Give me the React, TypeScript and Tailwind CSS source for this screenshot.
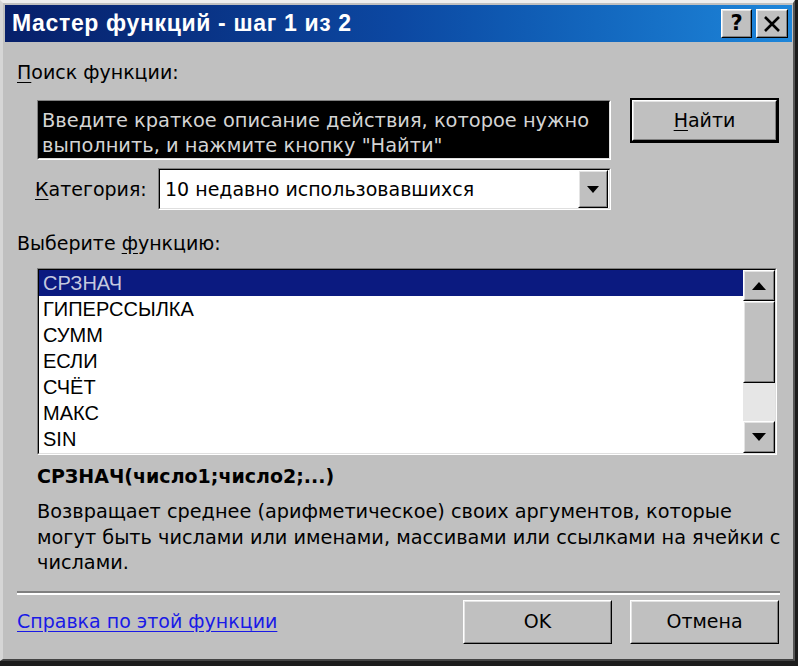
import React from "react";

function Raised({
  className = "",
  inner = "",
  children,
}: {
  className?: string;
  inner?: string;
  children?: React.ReactNode;
}) {
  return (
    <div
      className={`border border-t-white border-l-white border-r-black border-b-black bg-[#c0c0c0] ${className}`}
    >
      <div
        className={`w-full h-full border border-t-[#e4e4e4] border-l-[#e4e4e4] border-r-[#808080] border-b-[#808080] flex items-center justify-center ${inner}`}
      >
        {children}
      </div>
    </div>
  );
}

function Sunken({ className = "", children }: { className?: string; children?: React.ReactNode }) {
  return (
    <div
      className={`border border-t-[#808080] border-l-[#808080] border-r-white border-b-white ${className}`}
    >
      <div className="w-full h-full border border-t-black border-l-black border-r-[#dfdfdf] border-b-[#dfdfdf] flex overflow-hidden">
        {children}
      </div>
    </div>
  );
}

function TriUp() {
  return (
    <svg width="14" height="8" viewBox="0 0 14 8">
      <polygon points="7,0 14,8 0,8" fill="#000" />
    </svg>
  );
}

function TriDown({ w = 14, h = 8 }: { w?: number; h?: number }) {
  return (
    <svg width={w} height={h} viewBox={`0 0 ${w} ${h}`}>
      <polygon points={`0,0 ${w},0 ${w / 2},${h}`} fill="#000" />
    </svg>
  );
}

const items = ["СРЗНАЧ", "ГИПЕРССЫЛКА", "СУММ", "ЕСЛИ", "СЧЁТ", "МАКС", "SIN"];

export default function App() {
  return (
    <div className="w-[798px] h-[666px] bg-[#1c1c1c] font-['DejaVu_Sans',sans-serif] text-[19px] text-black">
      <div className="w-[795px] h-[661px] bg-[#c0c0c0] border-t-[3px] border-l-[3px] border-t-[#eeeeee] border-l-[#d6d6d6] border-r-2 border-b-2 border-r-[#555] border-b-[#444] pt-[2px] pl-[2px] pr-[1px] flex flex-col">
        {/* title bar */}
        <div className="h-[37px] bg-gradient-to-r from-[#071f6a] via-[#0c48a2] to-[#1e86da] flex items-center pl-[7px] pr-[4px]">
          <span className="text-white font-bold text-[23px] tracking-[0.65px] flex-1 font-['Liberation_Sans',Arial,sans-serif]">
            Мастер функций - шаг 1 из 2
          </span>
          <Raised className="w-[31px] h-[29px]">
            <span className="font-bold text-[21px] leading-none">?</span>
          </Raised>
          <Raised className="w-[32px] h-[29px] ml-[4px]">
            <svg width="18" height="16" viewBox="0 0 18 16">
              <path d="M2 1 L16 15 M16 1 L2 15" stroke="#000" strokeWidth="2.6" />
            </svg>
          </Raised>
        </div>

        <div className="flex flex-col pl-[12px] pr-[12px]">
          <div className="mt-[18px] leading-[24px]">
            <u className="underline-offset-[3px]">П</u>оиск функции:
          </div>

          <div className="mt-[14px] flex items-start">
            <Sunken className="ml-[20px] mt-[2px] w-[574px] h-[60px]">
              <div className="bg-black w-full h-full text-[#d4d4d4] text-[19.4px] leading-[25px] pl-[3px] pt-[6px] whitespace-nowrap">
                Введите краткое описание действия, которое нужно
                <br />
                выполнить, и нажмите кнопку "Найти"
              </div>
            </Sunken>
            <div className="ml-[19px] w-[149px] h-[45px] border-2 border-black">
              <Raised className="w-full h-full">
                <span>
                  <u className="underline-offset-[3px]">Н</u>айти
                </span>
              </Raised>
            </div>
          </div>

          <div className="mt-[8px] flex items-center">
            <div className="ml-[18px] w-[123px]">
              <u className="underline-offset-[3px]">К</u>атегория:
            </div>
            <Sunken className="w-[453px] h-[42px]">
              <div className="flex-1 bg-white flex items-center pl-[5px]">10 недавно использовавшихся</div>
              <div className="bg-white pr-[1px] flex">
                <Raised className="w-[30px] h-full">
                  <TriDown w={12} h={7} />
                </Raised>
              </div>
            </Sunken>
          </div>

          <div className="mt-[21px] leading-[24px]">
            Выберите <u className="underline-offset-[3px]">ф</u>ункцию:
          </div>

          <Sunken className="ml-[20px] mt-[13px] w-[740px] h-[187px]">
            <div className="flex-1 bg-white flex flex-col font-['Liberation_Sans',Arial,sans-serif] text-[20px]">
              {items.map((it, i) => (
                <div
                  key={it}
                  className={`h-[26px] leading-[26px] pl-[4px] ${
                    i === 0 ? "bg-[#0b1a80] text-[#c4c9df]" : ""
                  }`}
                >
                  {it}
                </div>
              ))}
            </div>
            <div className="w-[32px] flex flex-col bg-[#e6e6e6]">
              <Raised className="h-[31px]">
                <TriUp />
              </Raised>
              <Raised className="h-[82px]" />
              <div className="flex-1" />
              <Raised className="h-[32px]">
                <TriDown />
              </Raised>
            </div>
          </Sunken>

          <div className="ml-[20px] mt-[9px] font-bold text-[19px] leading-[24px]">
            СРЗНАЧ(число1;число2;...)
          </div>
          <div className="ml-[20px] mt-[11px] leading-[25.5px] text-[19.3px] w-[740px] whitespace-nowrap">
            Возвращает среднее (арифметическое) своих аргументов, которые
            <br />
            могут быть числами или именами, массивами или ссылками на ячейки с
            <br />
            числами.
          </div>

          <div className="mt-[15px] h-[4px] border-t-2 border-t-[#808080] border-b-2 border-b-white" />

          <div className="mt-[5px] flex items-center">
            <span className="flex-1 text-[#1a1ae6] underline underline-offset-[3px]">
              Справка по этой функции
            </span>
            <Raised className="w-[149px] h-[44px]">OK</Raised>
            <Raised className="w-[149px] h-[44px] ml-[18px] mr-[1px]">Отмена</Raised>
          </div>
        </div>
      </div>
    </div>
  );
}
